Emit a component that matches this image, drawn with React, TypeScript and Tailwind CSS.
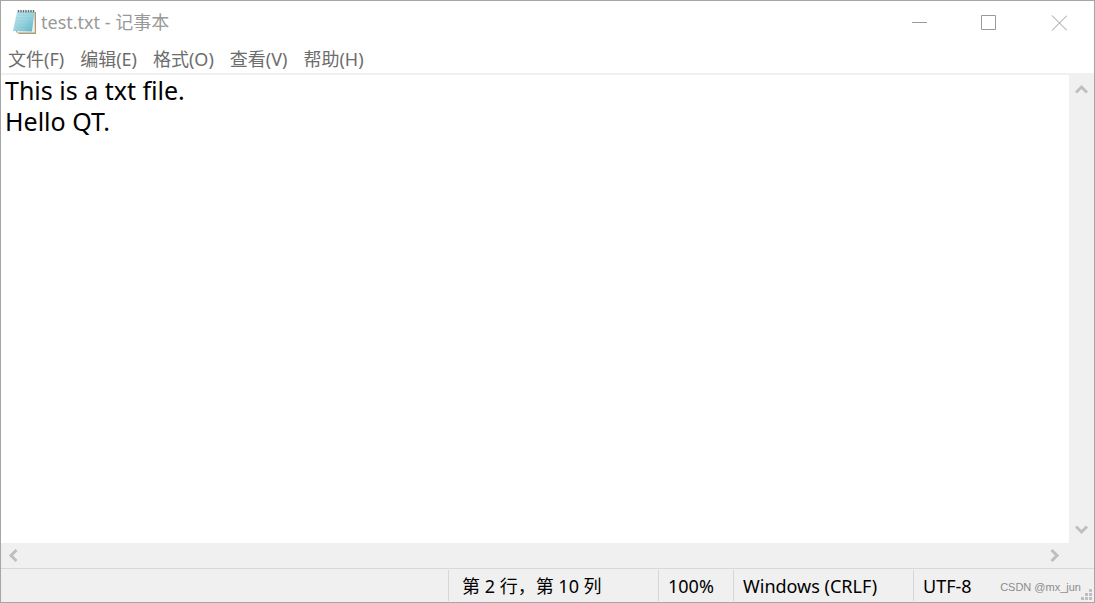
import type { ReactNode } from "react";

const menus = ["文件(F)", "编辑(E)", "格式(O)", "查看(V)", "帮助(H)"];

function NotepadIcon() {
  return (
    <svg width="25" height="26" viewBox="0 0 25 26" aria-hidden="true">
      <defs>
        <linearGradient id="page" x1="0" y1="0" x2="1" y2="1">
          <stop offset="0" stopColor="#c3e9f0" />
          <stop offset="0.5" stopColor="#9ad4e0" />
          <stop offset="1" stopColor="#5fb2c6" />
        </linearGradient>
      </defs>
      <path d="M6 3H24V25H7L4 23Z" fill="#ab9b7c" />
      <path d="M5 3H22.5L22.8 23.5H5Z" fill="#f4f1e8" />
      <path d="M5 2.5H22.5L20 22.5L1 22Z" fill="url(#page)" />
      <path d="M5 6H21M4.5 9H20.5M4 12H20M3.5 15H19.5M3 18H19" stroke="#86c3d1" strokeWidth="0.6" opacity="0.6" />
      <path d="M6.5 1v2.500M9 1v2.500M11.500 1v2.500M14 1v2.500M16.500 1v2.500M19 1v2.500M21.500 1v2.500" stroke="#5e6d70" strokeWidth="1.4" />
    </svg>
  );
}

function ScrollButton({ label, path, className }: { label: string; path: string; className: string }) {
  return (
    <button type="button" aria-label={label} className={`flex shrink-0 items-center justify-center ${className}`}>
      <svg width="13" height="13" viewBox="0 0 13 13" fill="none" stroke="#bfbfbf" strokeWidth="3">
        <path d={path} />
      </svg>
    </button>
  );
}

function WindowButton({ label, children }: { label: string; children: ReactNode }) {
  return (
    <button type="button" aria-label={label} className="flex w-[70px] items-center justify-center">
      <svg width="16" height="16" viewBox="0 0 16 16" fill="none" stroke="#999999">
        {children}
      </svg>
    </button>
  );
}

export default function App() {
  return (
    <main className="flex h-screen flex-col border border-[#a6a6a6] bg-white font-['Noto_Sans','Noto_Sans_CJK_SC',sans-serif] text-black">
      <header className="flex h-[43px] shrink-0">
        <div className="flex flex-1 items-center gap-1 pb-px pl-[11px]">
          <NotepadIcon />
          <h1 className="text-[18px] leading-6 text-[#999999]">test.txt - 记事本</h1>
        </div>
        <WindowButton label="最小化">
          <path d="M1 7.5H16" />
        </WindowButton>
        <WindowButton label="最大化">
          <path d="M0.5 0.5H14.5V14.5H0.5Z" />
        </WindowButton>
        <WindowButton label="关闭">
          <path d="M1 0.5L16 15.5M16 0.5L1 15.5" />
        </WindowButton>
      </header>

      <nav className="flex h-[31px] shrink-0 gap-4 border-b-2 border-[#f0f0f0] pl-[7px] text-[18px] leading-[30px] text-[#6d6d6d]">
        {menus.map((menu) => (
          <button key={menu} type="button">
            {menu}
          </button>
        ))}
      </nav>

      <div className="flex min-h-0 flex-1">
        <textarea
          aria-label="文本编辑器"
          spellCheck={false}
          wrap="off"
          className="min-w-0 flex-1 resize-none overflow-hidden px-1 text-[25px] leading-[31px] outline-none"
          defaultValue={"This is a txt file.\nHello QT."}
        />
        <div className="flex w-[25px] flex-col justify-between bg-[#f0f0f0]">
          <ScrollButton label="向上滚动" path="M1 9.5L6.500 4L12 9.5" className="h-[29px]" />
          <ScrollButton label="向下滚动" path="M1 3.500L6.500 9L12 3.500" className="h-[27px]" />
        </div>
      </div>

      <div className="flex h-[25px] shrink-0 justify-between bg-[#f0f0f0] pr-[25px]">
        <ScrollButton label="向左滚动" path="M9.500 1L4 6.500L9.500 12" className="w-[25px]" />
        <ScrollButton label="向右滚动" path="M3.500 1L9 6.500L3.500 12" className="w-[29px]" />
      </div>

      <footer className="flex h-[34px] shrink-0 border-t border-[#d7d7d7] bg-[#f0f0f0] py-px text-[18px] leading-[32px]">
        <div className="flex-1" />
        <div className="w-[210px] border-l border-[#d7d7d7] pl-[13px]">第 2 行，第 10 列</div>
        <div className="w-[75px] border-l border-[#d7d7d7] pl-[9px]">100%</div>
        <div className="w-[180px] border-l border-[#d7d7d7] pl-[9px]">Windows (CRLF)</div>
        <div className="flex w-[181px] justify-between border-l border-[#d7d7d7] pl-[9px]">
          <span>UTF-8</span>
          <div className="flex items-end">
            <span className="font-['Liberation_Sans',sans-serif] text-[11px] leading-[28px] text-[#8c8c8c]">CSDN @mx_jun</span>
            <svg width="13" height="13" viewBox="0 0 13 13" fill="#bfbfbf" aria-hidden="true">
              <path d="M8 1h3v3h-3zM4 5h3v3h-3zM8 5h3v3h-3zM0 9h3v3h-3zM4 9h3v3h-3zM8 9h3v3h-3z" />
            </svg>
          </div>
        </div>
      </footer>
    </main>
  );
}
